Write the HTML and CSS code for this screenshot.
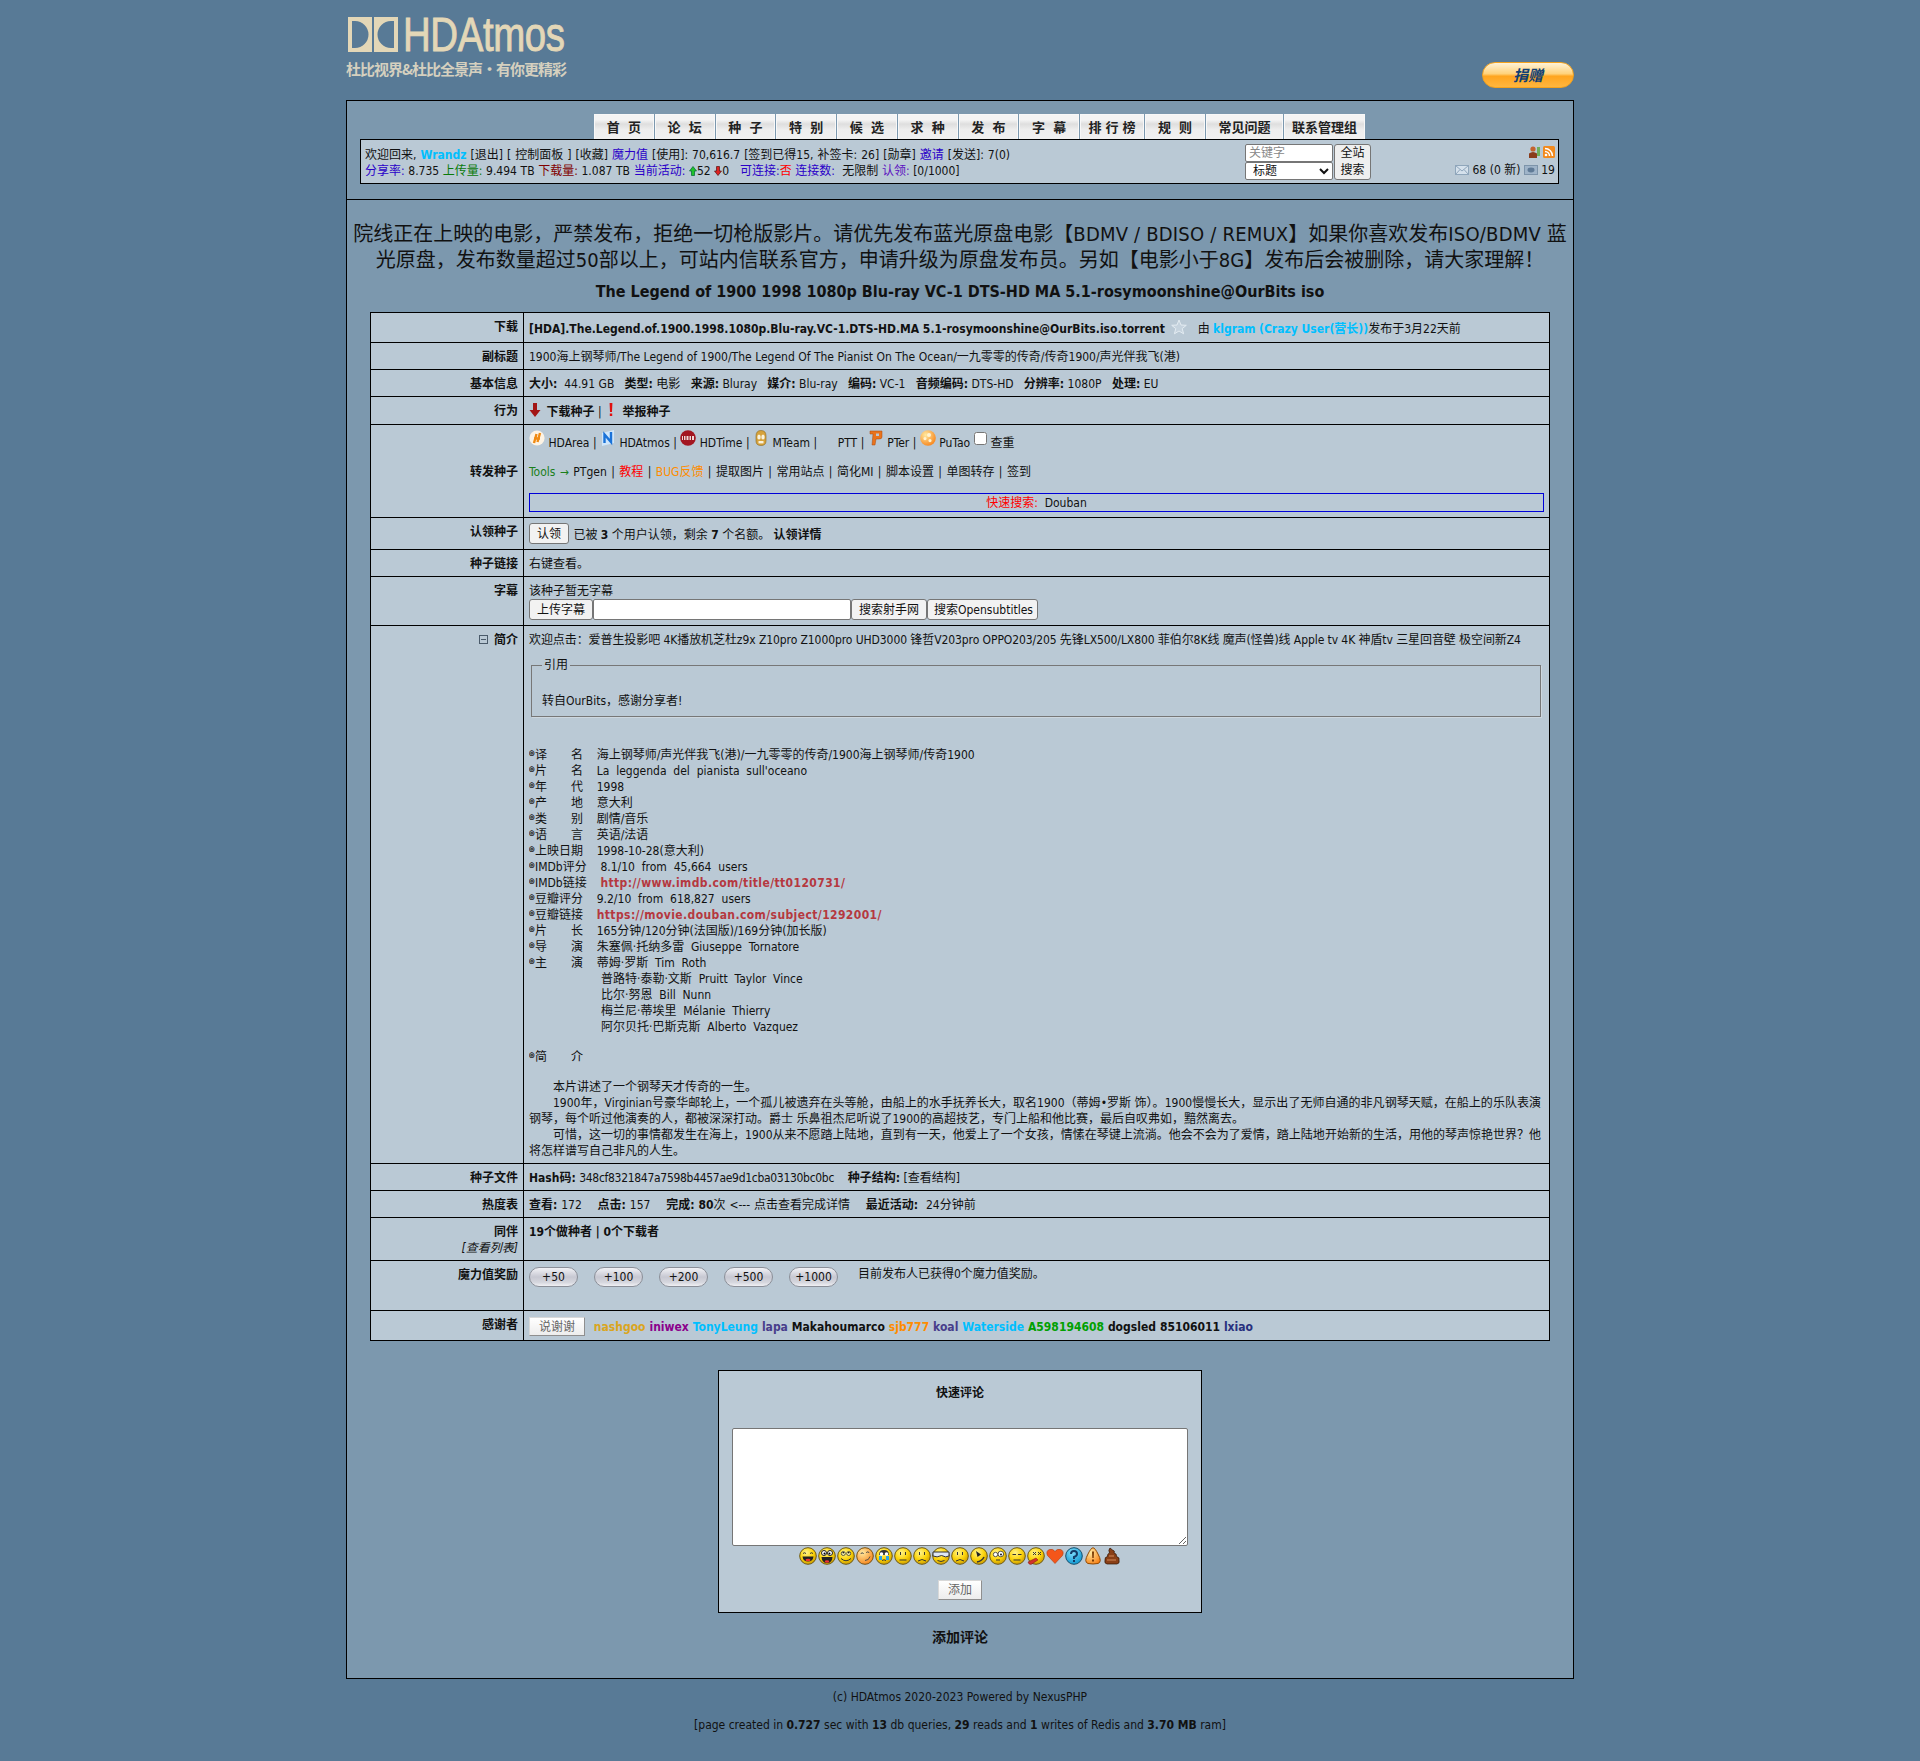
FILE: index.html
```html
<!DOCTYPE html>
<html lang="zh-CN">
<head>
<meta charset="utf-8">
<title>The Legend of 1900 - HDAtmos</title>
<link rel="stylesheet" href="styles.css">
</head>
<body>
<svg class="sprite" aria-hidden="true">
  <defs>
    <radialGradient id="yel" cx="40%" cy="30%" r="75%"><stop offset="0" stop-color="#fff38a"/><stop offset=".55" stop-color="#fcd40a"/><stop offset="1" stop-color="#c99700"/></radialGradient>
    <radialGradient id="org" cx="35%" cy="30%" r="80%"><stop offset="0" stop-color="#ffe9a0"/><stop offset="1" stop-color="#f77f14"/></radialGradient>
    <radialGradient id="sky" cx="40%" cy="30%" r="75%"><stop offset="0" stop-color="#7fdcfb"/><stop offset="1" stop-color="#0a94cf"/></radialGradient>
    <symbol id="face" viewBox="0 0 18 18"><circle cx="9" cy="9" r="8.3" fill="url(#yel)" stroke="#6e5a12"/></symbol>
  </defs>
</svg>

<div class="page">
  <header class="masthead">
    <div class="brand">
      <div class="brand-top">
        <svg class="brand-mark" viewBox="0 0 50 35"><path fill="#e3d7b7" fill-rule="evenodd" d="M0 0H24V35H0ZM4 4V31H7A13.5 13.5 0 0 0 7 4Z"/><path fill="#e3d7b7" fill-rule="evenodd" d="M26 0H50V35H26ZM46 4V31H43A13.5 13.5 0 0 1 43 4Z"/></svg>
        <span class="brand-name">HDAtmos</span>
      </div>
      <div class="brand-sub">杜比视界&amp;杜比全景声·有你更精彩</div>
    </div>
    <a class="donate">捐赠</a>
  </header>

  <main class="frame">
    <section class="topnav">
      <nav class="tabs">
        <a class="tab">首&nbsp;&nbsp;页</a><a class="tab">论&nbsp;&nbsp;坛</a><a class="tab">种&nbsp;&nbsp;子</a><a class="tab">特&nbsp;&nbsp;别</a><a class="tab">候&nbsp;&nbsp;选</a><a class="tab">求&nbsp;&nbsp;种</a><a class="tab">发&nbsp;&nbsp;布</a><a class="tab">字&nbsp;&nbsp;幕</a><a class="tab tab-rank">排&nbsp;行&nbsp;榜</a><a class="tab tab-rules">规&nbsp;&nbsp;则</a><a class="tab tab-faq">常见问题</a><a class="tab tab-staff">联系管理组</a>
      </nav>
      <div class="userbar">
        <div class="userinfo">
          <div class="info-first">欢迎回来, <b class="sky">Wrandz</b> [退出] [ 控制面板 ] [收藏] <span class="blue">魔力值</span> [使用]: 70,616.7 [签到已得15, 补签卡: 26] [勋章] <span class="blue">邀请</span> [发送]: 7(0)</div>
          <div class="info-second"><span class="blue">分享率:</span> 8.735 <span class="green">上传量:</span> 9.494 TB <span class="maroon">下载量:</span> 1.087 TB <span class="blue">当前活动:</span> <svg class="arrow" viewBox="0 0 8 10"><path fill="#1fc22a" stroke="#063" stroke-width=".7" d="M4 .5 7.5 5H5.500V9.500H2.500V5H.5Z"/></svg>52 <svg class="arrow" viewBox="0 0 8 10"><path fill="#d22" stroke="#511" stroke-width=".7" d="M4 9.5 7.500 5H5.500V.5H2.500V5H.5Z"/></svg>0 &nbsp; <span class="blue">可连接:</span><span class="red">否</span> <span class="blue">连接数:</span> &nbsp;无限制 <span class="violet">认领:</span> [0/1000]</div>
        </div>
        <form class="quick-search">
          <div class="qs-fields">
            <input class="qs-input" type="text" placeholder="关键字">
            <select class="qs-select"><option>标题</option></select>
          </div>
          <button class="qs-go" type="button">全站<br>搜索</button>
        </form>
        <div class="userside">
          <div class="side-icons">
            <svg class="tiny" viewBox="0 0 12 12"><circle cx="5" cy="3" r="2.6" fill="#c4622d"/><path fill="#8a3b1a" d="M1 12V7.5Q5 4.5 9 7.5V12Z"/><rect x="9" y="1" width="3" height="9" fill="#6fae5a"/></svg>
            <svg class="tiny" viewBox="0 0 12 12"><rect width="12" height="12" rx="1.5" fill="#f28a1e"/><circle cx="3" cy="9" r="1.3" fill="#fff"/><path fill="none" stroke="#fff" stroke-width="1.5" d="M2 5.5A4.5 4.5 0 0 1 6.5 10M2 2.5A7.5 7.5 0 0 1 9.5 10"/></svg>
          </div>
          <div class="side-stats">
            <svg class="mail" viewBox="0 0 14 10"><rect x=".5" y=".5" width="13" height="9" fill="#d5e1ec" stroke="#8fa6bb"/><path fill="none" stroke="#8fa6bb" d="M.5.5 7 6 13.500.5M.5 9.500 5 4.500M13.500 9.500 9 4.500"/></svg>
            68 (0 新)
            <svg class="mail" viewBox="0 0 14 10"><rect x=".5" y=".5" width="13" height="9" fill="#9fb4c9" stroke="#7d94aa"/><ellipse cx="7" cy="5" rx="3.5" ry="2.4" fill="#5f7a96"/></svg>
            19
          </div>
        </div>
      </div>
    </section>

    <section class="notice">
      院线正在上映的电影，严禁发布，拒绝一切枪版影片。请优先发布蓝光原盘电影【<span class="latin">BDMV / BDISO / REMUX</span>】如果你喜欢发布<span class="latin">ISO/BDMV</span> 蓝<br>光原盘，发布数量超过50部以上，可站内信联系官方，申请升级为原盘发布员。另如【电影小于8G】发布后会被删除，请大家理解！
    </section>
    <h1 class="title">The Legend of 1900 1998 1080p Blu-ray VC-1 DTS-HD MA 5.1-rosymoonshine@OurBits iso</h1>

    <table class="details">
      <colgroup><col class="col-label"><col></colgroup>
      <tr class="row-dl">
        <th>下载</th>
        <td><b>[HDA].The.Legend.of.1900.1998.1080p.Blu-ray.VC-1.DTS-HD.MA 5.1-rosymoonshine@OurBits.iso.torrent</b>
          <svg class="star" viewBox="0 0 16 16"><path fill="#c6d3de" stroke="#e4ecf2" d="M8 1 10 6 15.3 6.3 11.2 9.6 12.6 14.8 8 12 3.4 14.8 4.8 9.6.7 6.3 6 6Z"/></svg>
          &nbsp; 由 <b class="sky">klgram</b> <b class="sky">(Crazy User(营长))</b>发布于3月22天前</td>
      </tr>
      <tr><th>副标题</th><td>1900海上钢琴师/The Legend of 1900/The Legend Of The Pianist On The Ocean/一九零零的传奇/传奇1900/声光伴我飞(港)</td></tr>
      <tr><th>基本信息</th><td><b>大小:</b>&nbsp; 44.91 GB &nbsp; <b>类型:</b> 电影 &nbsp; <b>来源:</b> Bluray &nbsp; <b>媒介:</b> Blu-ray &nbsp; <b>编码:</b> VC-1 &nbsp; <b>音频编码:</b> DTS-HD &nbsp; <b>分辨率:</b> 1080P &nbsp; <b>处理:</b> EU</td></tr>
      <tr class="row-act">
        <th>行为</th>
        <td><svg class="act" viewBox="0 0 12 14"><path fill="#a31515" d="M4 0H8V7H11.5L6 14 .5 7H4Z"/></svg> <b>下载种子</b> | <svg class="act" viewBox="0 0 12 14"><path fill="#e01010" d="M4.6 0H7.4L7 9H5ZM4.8 10.5H7.2V13H4.8Z"/></svg> <b>举报种子</b></td>
      </tr>
      <tr class="row-fwd">
        <th class="mid">转发种子</th>
        <td>
          <div class="fwd-line fwd-sites">
            <svg class="site" viewBox="0 0 16 16"><circle cx="8" cy="8" r="7.6" fill="#fdf3e4"/><path fill="none" stroke="#f08a12" stroke-width="2.4" d="M5 13 7.5 4M5 8.5H11M11 3 8.5 12"/></svg> HDArea | 
            <svg class="site" viewBox="0 0 16 16"><path fill="#cfe6fb" d="M2 3 14 0V13L2 16Z"/><path fill="none" stroke="#1a72d8" stroke-width="2.4" d="M4.5 13V4.5L11 12V2"/></svg> HDAtmos | 
            <svg class="site" viewBox="0 0 16 16"><circle cx="8" cy="8" r="7.8" fill="#a31621"/><rect x="2" y="6" width="12" height="4" fill="#f2d6d6"/><path fill="none" stroke="#8d1119" d="M3.5 6V10M6 6V10M9 6V10M11.5 6V10"/></svg> HDTime | 
            <svg class="site" viewBox="0 0 16 16"><path fill="#d6a23b" stroke="#8b6a22" stroke-width=".6" d="M3 6Q3 .5 8 .5T13 6V11Q13 15.5 8 15.5T3 11Z"/><ellipse cx="6" cy="7" rx="1.7" ry="2.6" fill="#f8f2de"/><ellipse cx="10" cy="7" rx="1.7" ry="2.6" fill="#f8f2de"/><rect x="5.5" y="11" width="5" height="2.4" fill="#f8f2de"/></svg> MTeam | &nbsp; &nbsp; &nbsp;PTT | 
            <svg class="site" viewBox="0 0 16 16"><path fill="#e9731d" stroke="#a8480f" stroke-width=".5" d="M2 1H14V7Q14 9 11 9H8L7 15H4L5 4H2Z"/><rect x="8" y="3.5" width="3" height="2.5" fill="#b9c8d4"/></svg> PTer | 
            <svg class="site" viewBox="0 0 16 16"><circle cx="8" cy="8" r="7.8" fill="url(#org)"/><path fill="#fff3d2" d="M9 3a2 2 0 1 1 0 4 2 2 0 0 1 0-4M5 7a1.6 1.6 0 1 1 0 3.200 1.600 1.600 0 0 1 0-3.200M10 9a1.600 1.600 0 1 1 0 3.200 1.600 1.600 0 0 1 0-3.200"/></svg> PuTao<input class="recheck" type="checkbox"> 查重
          </div>
          <div class="fwd-line fwd-tools"><span class="tools">Tools →</span> PTgen | <span class="red">教程</span> | <span class="amber">BUG反馈</span> | 提取图片 | 常用站点 | 简化MI | 脚本设置 | 单图转存 | 签到</div>
          <div class="quicklinks"><span class="red">快速搜索:</span>&nbsp; Douban</div>
        </td>
      </tr>
      <tr class="row-claim"><th>认领种子</th><td><button class="btn btn-claim" type="button">认领</button> 已被 <b>3</b> 个用户认领，剩余 <b>7</b> 个名额。 <b>认领详情</b></td></tr>
      <tr><th>种子链接</th><td>右键查看。</td></tr>
      <tr class="row-subs">
        <th>字幕</th>
        <td>
          <div>该种子暂无字幕</div>
          <div class="sub-actions"><button class="btn btn-upload" type="button">上传字幕</button><input class="sub-input" type="text"><button class="btn btn-shooter" type="button">搜索射手网</button><button class="btn btn-os" type="button">搜索Opensubtitles</button></div>
        </td>
      </tr>
      <tr class="row-desc">
        <th><svg class="fold" viewBox="0 0 9 9"><rect x=".5" y=".5" width="8" height="8" fill="none" stroke="#4a5a6a"/><path stroke="#4a5a6a" d="M2 4.500H7"/></svg> 简介</th>
        <td>
          <div class="promo">欢迎点击：爱普生投影吧 4K播放机芝杜z9x Z10pro Z1000pro UHD3000 锋哲V203pro OPPO203/205 先锋LX500/LX800 菲伯尔8K线 魔声(怪兽)线 Apple tv 4K 神盾tv 三星回音壁 极空间新Z4</div>
          <fieldset class="quote"><legend>引用</legend>转自OurBits，感谢分享者!</fieldset>
          <div class="info">
            <div><i class="dot">◎</i>译&nbsp;&nbsp;&nbsp;&nbsp;&nbsp;&nbsp;&nbsp;名&nbsp;&nbsp;&nbsp;&nbsp;海上钢琴师/声光伴我飞(港)/一九零零的传奇/1900海上钢琴师/传奇1900</div>
            <div><i class="dot">◎</i>片&nbsp;&nbsp;&nbsp;&nbsp;&nbsp;&nbsp;&nbsp;名&nbsp;&nbsp;&nbsp;&nbsp;La&nbsp; leggenda&nbsp; del&nbsp; pianista&nbsp; sull'oceano</div>
            <div><i class="dot">◎</i>年&nbsp;&nbsp;&nbsp;&nbsp;&nbsp;&nbsp;&nbsp;代&nbsp;&nbsp;&nbsp;&nbsp;1998</div>
            <div><i class="dot">◎</i>产&nbsp;&nbsp;&nbsp;&nbsp;&nbsp;&nbsp;&nbsp;地&nbsp;&nbsp;&nbsp;&nbsp;意大利</div>
            <div><i class="dot">◎</i>类&nbsp;&nbsp;&nbsp;&nbsp;&nbsp;&nbsp;&nbsp;别&nbsp;&nbsp;&nbsp;&nbsp;剧情/音乐</div>
            <div><i class="dot">◎</i>语&nbsp;&nbsp;&nbsp;&nbsp;&nbsp;&nbsp;&nbsp;言&nbsp;&nbsp;&nbsp;&nbsp;英语/法语</div>
            <div><i class="dot">◎</i>上映日期&nbsp;&nbsp;&nbsp;&nbsp;1998-10-28(意大利)</div>
            <div><i class="dot">◎</i>IMDb评分&nbsp;&nbsp;&nbsp;&nbsp;8.1/10&nbsp; from&nbsp; 45,664&nbsp; users</div>
            <div><i class="dot">◎</i>IMDb链接&nbsp;&nbsp;&nbsp;&nbsp;<a class="extlink">http://www.imdb.com/title/tt0120731/</a></div>
            <div><i class="dot">◎</i>豆瓣评分&nbsp;&nbsp;&nbsp;&nbsp;9.2/10&nbsp; from&nbsp; 618,827&nbsp; users</div>
            <div><i class="dot">◎</i>豆瓣链接&nbsp;&nbsp;&nbsp;&nbsp;<a class="extlink">https://movie.douban.com/subject/1292001/</a></div>
            <div><i class="dot">◎</i>片&nbsp;&nbsp;&nbsp;&nbsp;&nbsp;&nbsp;&nbsp;长&nbsp;&nbsp;&nbsp;&nbsp;165分钟/120分钟(法国版)/169分钟(加长版)</div>
            <div><i class="dot">◎</i>导&nbsp;&nbsp;&nbsp;&nbsp;&nbsp;&nbsp;&nbsp;演&nbsp;&nbsp;&nbsp;&nbsp;朱塞佩·托纳多雷&nbsp; Giuseppe&nbsp; Tornatore</div>
            <div><i class="dot">◎</i>主&nbsp;&nbsp;&nbsp;&nbsp;&nbsp;&nbsp;&nbsp;演&nbsp;&nbsp;&nbsp;&nbsp;蒂姆·罗斯&nbsp; Tim&nbsp; Roth</div>
            <div class="cast">普路特·泰勒·文斯&nbsp; Pruitt&nbsp; Taylor&nbsp; Vince</div>
            <div class="cast">比尔·努恩&nbsp; Bill&nbsp; Nunn</div>
            <div class="cast">梅兰尼·蒂埃里&nbsp; Mélanie&nbsp; Thierry</div>
            <div class="cast">阿尔贝托·巴斯克斯&nbsp; Alberto&nbsp; Vazquez</div>
            <div class="gap"><i class="dot">◎</i>简&nbsp;&nbsp;&nbsp;&nbsp;&nbsp;&nbsp;&nbsp;介</div>
            <div class="gap">
              <p>本片讲述了一个钢琴天才传奇的一生。</p>
              <p>1900年，Virginian号豪华邮轮上，一个孤儿被遗弃在头等舱，由船上的水手抚养长大，取名1900（蒂姆•罗斯 饰）。1900慢慢长大，显示出了无师自通的非凡钢琴天赋，在船上的乐队表演钢琴，每个听过他演奏的人，都被深深打动。爵士 乐鼻祖杰尼听说了1900的高超技艺，专门上船和他比赛，最后自叹弗如，黯然离去。</p>
              <p>可惜，这一切的事情都发生在海上，1900从来不愿踏上陆地，直到有一天，他爱上了一个女孩，情愫在琴键上流淌。他会不会为了爱情，踏上陆地开始新的生活，用他的琴声惊艳世界？他将怎样谱写自己非凡的人生。</p>
            </div>
          </div>
        </td>
      </tr>
      <tr><th>种子文件</th><td><b>Hash码:</b> <span class="hash">348cf8321847a7598b4457ae9d1cba03130bc0bc</span> &nbsp; &nbsp;<b>种子结构:</b> [查看结构]</td></tr>
      <tr class="row-heat"><th>热度表</th><td><b>查看:</b> 172 &nbsp; &nbsp;<b>点击:</b> 157 &nbsp; &nbsp;<b>完成:</b> <b>80</b>次 &lt;--- 点击查看完成详情 &nbsp; &nbsp;<b>最近活动:</b>&nbsp; 24分钟前</td></tr>
      <tr class="row-peers"><th>同伴<br><em>[查看列表]</em></th><td><b>19个做种者 | 0个下载者</b></td></tr>
      <tr class="row-bonus">
        <th>魔力值奖励</th>
        <td>
          <div class="bonus"><button class="pill" type="button">+50</button><button class="pill" type="button">+100</button><button class="pill" type="button">+200</button><button class="pill" type="button">+500</button><button class="pill" type="button">+1000</button><span class="bonus-note">目前发布人已获得0个魔力值奖励。</span></div>
        </td>
      </tr>
      <tr class="row-thanks">
        <th>感谢者</th>
        <td><button class="soft-btn thanks-btn" type="button">说谢谢</button> &nbsp;<b class="gold">nashgoo</b> <b class="purple">iniwex</b> <b class="sky">TonyLeung</b> <b class="slate">lapa</b> <b>Makahoumarco</b> <b class="orange">sjb777</b> <b class="slate">koal</b> <b class="sky">Waterside</b> <b class="leaf">A598194608</b> <b>dogsled</b> <b>85106011</b> <b class="navy">lxiao</b></td>
      </tr>
    </table>

    <form class="comment">
      <div class="comment-title">快速评论</div>
      <textarea class="comment-text"></textarea>
      <div class="smilies">
        <svg viewBox="0 0 18 18"><use href="#face"/><path fill="none" stroke="#333" d="M4 6.500Q5.500 5 7 6.500M11 6.500Q12.500 5 14 6.500"/><path fill="#222" d="M3.500 9.500H14.500Q14 14.500 9 14.500T3.500 9.500Z"/><ellipse cx="9" cy="13" rx="2.500" ry="1.300" fill="#e33"/></svg>
        <svg viewBox="0 0 18 18"><use href="#face"/><circle cx="6" cy="6" r="2.500" fill="#fff" stroke="#222"/><circle cx="12" cy="6" r="2.500" fill="#fff" stroke="#222"/><circle cx="6.500" cy="6.500" r="1"/><circle cx="11.500" cy="6.500" r="1"/><path fill="#222" d="M3.500 10H14.500Q14 16 9 16T3.500 10Z"/><ellipse cx="9" cy="14.500" rx="2.200" ry="1.200" fill="#e33"/></svg>
        <svg viewBox="0 0 18 18"><use href="#face"/><circle cx="6.300" cy="6.500" r="2" fill="#fff8b0" stroke="#333" stroke-width=".8"/><circle cx="11.700" cy="6.500" r="2" fill="#fff8b0" stroke="#333" stroke-width=".8"/><circle cx="6.300" cy="5.800" r=".8"/><circle cx="11.700" cy="5.800" r=".8"/><path fill="none" stroke="#333" d="M4 11.500Q9 16 14 11.500"/></svg>
        <svg viewBox="0 0 18 18"><circle cx="9" cy="9" r="8.300" fill="url(#org)" stroke="#7a5210"/><path fill="none" stroke="#444" stroke-width=".9" d="M5 7a1.200 1.200 0 1 1 2.400 0M10.500 6a1.200 1.200 0 1 1 2.400 0M9 13.500Q13 13.500 14 9.500"/></svg>
        <svg viewBox="0 0 18 18"><use href="#face"/><path fill="#333" d="M4 8Q4 3 9 3T14 8Z"/><circle cx="6.500" cy="7" r="1.800" fill="#fff"/><circle cx="11.500" cy="7" r="1.800" fill="#fff"/><path fill="#2aa5e8" d="M4 9H7V13H4ZM11 9H14V13H11Z"/><path fill="none" stroke="#333" d="M7 13.500Q9 12 11 13.500"/></svg>
        <svg viewBox="0 0 18 18"><use href="#face"/><path stroke="#333" d="M6.500 5V8M11.500 5V8M5.500 13H12.500" fill="none"/></svg>
        <svg viewBox="0 0 18 18"><use href="#face"/><path stroke="#333" fill="none" d="M6.500 5V8M11.500 5V8M5 14Q9 11 13 14"/></svg>
        <svg viewBox="0 0 18 18"><use href="#face"/><path fill="#dfe8f5" stroke="#333" d="M1 5H17V9Q14 11 9.500 8.500 5 11 1 9Z"/><path fill="none" stroke="#333" d="M5.500 13.500Q9 15.500 12.500 13.500"/></svg>
        <svg viewBox="0 0 18 18"><use href="#face"/><path stroke="#333" fill="none" d="M6.500 5V8M11.500 5V8M5 14Q9 11 13 14"/></svg>
        <svg viewBox="0 0 18 18"><use href="#face"/><path fill="#222" d="M6 4 11 7.500 7.500 10Z"/><path fill="none" stroke="#333" stroke-width="1.500" d="M7 15Q12 14 14 10"/></svg>
        <svg viewBox="0 0 18 18"><use href="#face"/><circle cx="6.500" cy="7.500" r="2.200" fill="#fff" stroke="#333" stroke-width=".8"/><circle cx="11.800" cy="7" r="2.800" fill="#fff" stroke="#333" stroke-width=".8"/><circle cx="12" cy="7.500" r=".9"/><path stroke="#333" d="M7 13H11" fill="none"/></svg>
        <svg viewBox="0 0 18 18"><use href="#face"/><path stroke="#333" fill="none" d="M4.500 7.500H8M10 7.500H13.500M5.500 13H12.500"/></svg>
        <svg viewBox="0 0 18 18"><use href="#face"/><path stroke="#333" fill="none" d="M6 5 9 8M9 5 6 8M11 5 14 8M14 5 11 8"/><path fill="#d2322a" stroke="#7a1610" stroke-width=".5" d="M1 15 9 11 11 13 4 17.500Q1.500 17.500 1 15Z"/></svg>
        <svg viewBox="0 0 18 18"><path fill="#f4561a" stroke="#b33a0c" stroke-width=".6" d="M9 16.500 1.500 8.500Q-.5 4 3.500 2.500 7 1.500 9 4.500 11 1.500 14.500 2.500 18.500 4 16.500 8.500Z"/></svg>
        <svg viewBox="0 0 18 18"><circle cx="9" cy="9" r="8.300" fill="url(#sky)" stroke="#14506e"/><path fill="none" stroke="#123a66" stroke-width="2" d="M6 7Q6 4 9 4T12 7Q12 9 9 10V12"/><rect x="8" y="13" width="2" height="2" fill="#123a66"/></svg>
        <svg viewBox="0 0 18 18"><path fill="url(#org)" stroke="#8f4a05" d="M9 .8Q11 .8 14 7 18.500 15 14 16.500 9 17.500 4 16.500-.5 15 4 7 7 .8 9 .8Z"/><path fill="#7a3a04" d="M8 4.500H10L9.700 11H8.300ZM8 12.500H10V14.500H8Z"/></svg>
        <svg viewBox="0 0 18 18"><path fill="#8a3f16" stroke="#2f1405" stroke-width=".7" d="M7 1 9.500 3Q12.500 4 11 6 14 6.500 13.500 9.500 17 10.500 16 13 17 16.500 14 17H4Q1 16.500 2 13 1.500 10 4.500 9.500 4 7 6.500 6 5 3 7 1Z"/><path fill="none" stroke="#d28a5a" d="M4 13H13M6 9H11"/></svg>
      </div>
      <button class="soft-btn add-btn" type="button">添加</button>
    </form>
    <div class="add-comment">添加评论</div>
  </main>

  <footer class="site-foot">
    <div>(c) HDAtmos 2020-2023 Powered by NexusPHP</div>
    <div class="foot-stats">[page created in <b>0.727</b> sec with <b>13</b> db queries, <b>29</b> reads and <b>1</b> writes of Redis and <b>3.70 MB</b> ram]</div>
  </footer>
</div>
</body>
</html>
```
FILE: styles.css
```css
* { box-sizing: border-box; }

html, body { margin: 0; padding: 0; }

body {
  background: #587a96;
  color: #111;
  font: 12px/16px "DejaVu Sans Condensed", "DejaVu Sans", "Noto Sans CJK SC", sans-serif;
  font-stretch: condensed;
}

button, input, select, textarea { font-stretch: condensed; }

.sprite { display: block; width: 0; height: 0; }

.page { width: 1228px; margin: 0 auto; }

/* masthead */
.masthead { height: 100px; display: flex; justify-content: space-between; align-items: flex-start; }
.brand { padding-top: 17px; color: #e3d7b7; }
.brand-top { display: flex; align-items: center; height: 35px; margin-left: 2px; }
.brand-mark { width: 50px; height: 35px; flex: none; }
.brand-name {
  font: 48px/35px "Liberation Sans", sans-serif; letter-spacing: -.5px; margin-left: 5px;
  transform: scaleX(.8); transform-origin: left center; -webkit-text-stroke: .9px #e3d7b7;
}
.brand-sub { font: bold 15px/16px "Noto Sans CJK SC", sans-serif; letter-spacing: -1px; margin-top: 9px; color: #d5d0bf; white-space: nowrap; }
.donate {
  width: 92px; height: 26px; margin-top: 62px; border-radius: 13px;
  border: 1px solid #f5a21c;
  background: linear-gradient(#fff3d8, #ffd27a 45%, #ffa51f 55%, #ffb63f);
  color: #0f3f74; font: italic bold 15px/24px "Noto Sans CJK SC", sans-serif; text-align: center;
}

/* framed content */
.frame { border: 1px solid #000; height: 1579px; background: #7c98ae; }

.topnav { height: 99px; border-bottom: 1px solid #000; padding-top: 13px; }
.tabs { display: flex; padding-left: 247px; height: 25px; }
.tab {
  width: 59.75px; height: 25px; margin-right: 1px; flex: none;
  background: linear-gradient(#f4f4f4, #f4f4f4 20%, #dedede 38%, #eeeeee 62%, #f0f0f0);
  border: 1px solid #f8f8f8; border-bottom: 0;
  font-weight: bold; font-size: 13px; text-align: center; line-height: 25px; color: #222; white-space: nowrap;
}
.tab-rank { width: 64px; }
.tab-rules { width: 60px; }
.tab-faq { width: 77px; }
.tab-staff { width: 81px; margin-right: 0; }

.userbar {
  margin: 0 14px 0 13px; height: 45px; border: 1px solid #000; background: #bac9d5;
  display: flex; align-items: flex-start;
}
.userinfo { width: 884px; padding: 7px 0 0 4px; white-space: nowrap; flex: none; }
.info-first { word-spacing: .6px; }
.info-second { word-spacing: .2px; }
.quick-search { display: flex; margin-top: 4px; flex: none; }
.qs-fields { width: 88px; display: flex; flex-direction: column; }
.qs-input, .qs-select {
  width: 88px; height: 18px; margin: 0; padding: 0 3px; font: inherit; background: #fff;
  border: 1px solid #767676; border-radius: 2px; color: #111;
}
.qs-input::placeholder { color: #888; }
.qs-go {
  width: 37px; height: 36px; margin: 0 0 0 1px; padding: 0; font: inherit; line-height: 17px;
  background: #efefef; border: 1px solid #767676; border-radius: 3px; color: #111;
}
.userside { flex: 1; text-align: right; padding: 5px 3px 0 0; }
.side-icons { height: 15px; }
.side-stats { height: 18px; white-space: nowrap; padding-top: 2px; }
.tiny { width: 12px; height: 12px; vertical-align: -1px; }
.mail { width: 14px; height: 10px; vertical-align: -1px; }
.arrow { width: 8px; height: 10px; vertical-align: -1px; }

.blue { color: #2a00c8; }
.green { color: #0a7a0a; }
.maroon { color: #800000; }
.red { color: #f00; }
.violet { color: #5a10c0; }
.sky { color: #00bfff; }
.gold { color: #daa520; }
.purple { color: #8b008b; }
.slate { color: #483d8b; }
.orange { color: #ff8c00; }
.leaf { color: #00a000; }
.navy { color: #28307e; }
.amber { color: #ff8c00; }
.tools { color: #1b7f1b; }

.notice { padding: 21px 4px 0; font-size: 20px; line-height: 26px; text-align: center; color: #111; white-space: nowrap; }
.notice .latin { letter-spacing: .2px; }
.title { margin: 9px 0 10px; font-size: 16px; line-height: 20px; font-weight: bold; text-align: center; color: #111; }

/* torrent details */
.details { width: 1180px; margin: 0 auto; border-collapse: collapse; background: #bac9d5; table-layout: fixed; }
.col-label { width: 153px; }
.details th, .details td { border: 1px solid #000; padding: 6px 5px 4px; vertical-align: top; line-height: 16px; font-size: 12px; }
.details th { text-align: right; font-weight: bold; }
.details th.mid { vertical-align: middle; }
.details th em { font-weight: normal; }
.details .row-dl td { padding-top: 8px; padding-bottom: 5px; }
.details .row-act td { padding-top: 7px; }
.details .row-fwd td, .details .row-claim td, .details .row-bonus td { padding-top: 5px; padding-bottom: 5px; }
.star { width: 16px; height: 16px; margin: -4px 0 -3px 3px; vertical-align: 1px; }
.act { width: 12px; height: 14px; margin: -3px 2px -2px 0; vertical-align: 1px; }
.fwd-line { height: 24px; line-height: 24px; white-space: nowrap; }
.fwd-sites { margin-bottom: 6px; }
.fwd-tools { margin-bottom: 9px; word-spacing: 1px; }
.site { width: 16px; height: 16px; vertical-align: 1px; }
.recheck { width: 13px; height: 13px; margin: 0 0 0 4px; vertical-align: 2px; }
.quicklinks { height: 19px; border: 1px solid #0000d8; text-align: center; line-height: 18px; }

.btn {
  height: 21px; margin: 0; padding: 0 6px; font: inherit; color: #111;
  background: #f2f2f2; border: 1px solid #767676; border-radius: 3px; white-space: nowrap;
}
.btn-claim { width: 40px; margin-right: 1px; vertical-align: 1px; }
.details .row-subs td { padding-bottom: 5px; }
.sub-actions { display: flex; margin-top: 0; }
.btn-upload { width: 64px; }
.sub-input { width: 258px; height: 21px; margin: 0; padding: 0 3px; background: #fff; border: 1px solid #767676; border-radius: 2px; }
.btn-shooter { width: 76px; }
.btn-os { width: 111px; }

.fold { width: 9px; height: 9px; vertical-align: 0; margin-right: 2px; }
.promo { letter-spacing: -.08px; white-space: nowrap; }
.quote {
  margin: 9px 3px 0 2px; padding: 20px 10px 9px; height: 60px;
  border: 1px solid #777; box-shadow: 1px 1px 0 #cdd7df;
}
.quote legend { padding: 0 2px; line-height: 16px; }
.info { margin: 30px 3px 0 0; }
.info p { margin: 0; text-indent: 24px; text-align: justify; }
.dot {
  display: inline-block; width: 6px; font-style: normal; font-weight: bold; font-size: 7px; line-height: 10px;
  vertical-align: 1px; overflow: hidden; color: #222; -webkit-text-stroke: .3px #222;
}
.cast { padding-left: 72px; }
.gap { margin-top: 14px; }
.extlink { font-weight: bold; color: #b5383f; letter-spacing: .4px; }
.hash { letter-spacing: -.3px; }
.row-heat td { word-spacing: .5px; }

.row-peers em { font-style: italic; }
.bonus { display: flex; align-items: flex-start; }
.row-bonus td { height: 50px; }
.pill {
  width: 49px; height: 20px; margin: 1px 16px 0 0; padding: 0; font: inherit; color: #111;
  border: 1px solid #8b8f98; border-radius: 10px;
  background: linear-gradient(#f2f2f6, #c7c8d2 50%, #d6d7de 80%, #f0f0f4);
}
.pill:nth-child(5) { margin-right: 20px; }
.soft-btn {
  margin: 0; padding: 0; font: inherit; color: #666;
  background: linear-gradient(#fff, #ededed);
  border: 1px solid #d8d8d8; border-right-color: #8f8f8f; border-bottom-color: #8f8f8f;
}
.thanks-btn { width: 56px; height: 19px; vertical-align: 0; margin-right: 1px; }
.row-thanks td { word-spacing: .5px; }

/* quick comment */
.comment {
  width: 484px; height: 243px; margin: 29px auto 0; border: 1px solid #000; background: #bac9d5;
  display: flex; flex-direction: column; align-items: center;
}
.comment-title { margin-top: 14px; font-weight: bold; }
.comment-text { width: 456px; height: 118px; margin: 27px 0 0; padding: 2px; background: #fff; border: 1px solid #767676; border-radius: 2px; display: block; }
.smilies { display: flex; gap: 1px; height: 18px; margin-top: 1px; }
.smilies svg { width: 18px; height: 18px; flex: none; }
.add-btn { width: 44px; height: 20px; margin-top: 15px; }
.add-comment { margin-top: 15px; text-align: center; font-weight: bold; font-size: 14px; line-height: 18px; }

/* footer */
.site-foot { text-align: center; padding: 10px 0 20px; }
.foot-stats { margin-top: 12px; }
```
